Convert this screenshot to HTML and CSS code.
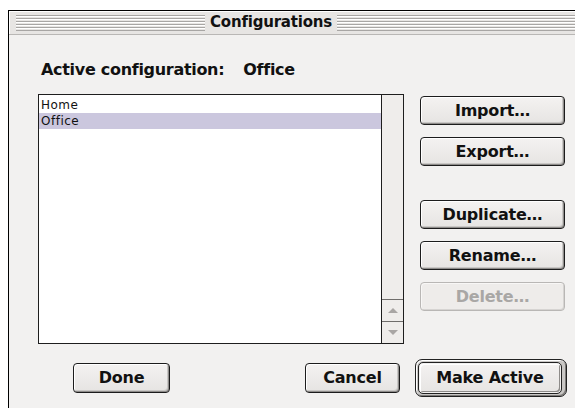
FILE: index.html
```html
<!DOCTYPE html>
<html>
<head>
<meta charset="utf-8">
<title>Configurations</title>
<link rel="stylesheet" href="styles.css">
</head>
<body>
<div class="window">
  <div class="titlebar">
    <div class="stripes stripes-left"></div>
    <div class="title">Configurations</div>
    <div class="stripes stripes-right"></div>
  </div>
  <div class="content">
    <div class="heading"><span>Active configuration:</span><span class="active-name">Office</span></div>
    <div class="main-row">
      <div class="listbox">
        <ul class="list">
          <li class="item">Home</li>
          <li class="item selected">Office</li>
        </ul>
        <div class="scrollbar">
          <div class="track"></div>
          <div class="arrow arrow-up"><span class="tri tri-up"></span></div>
          <div class="arrow arrow-down"><span class="tri tri-down"></span></div>
        </div>
      </div>
      <div class="side-buttons">
        <button class="btn">Import…</button>
        <button class="btn">Export…</button>
        <button class="btn group-start">Duplicate…</button>
        <button class="btn">Rename…</button>
        <button class="btn" disabled>Delete…</button>
      </div>
    </div>
    <div class="bottom-row">
      <button class="btn btn-done">Done</button>
      <button class="btn btn-cancel">Cancel</button>
      <div class="default-ring">
        <button class="btn btn-default">Make Active</button>
      </div>
    </div>
  </div>
</div>
</body>
</html>
```

FILE: styles.css
```css
html, body {
  margin: 0;
  padding: 0;
  background: #ffffff;
  overflow: hidden;
}

body {
  width: 575px;
  height: 408px;
}

.window {
  margin: 10px 0 0 8px;
  width: 567px;
  height: 398px;
  border-top: 1px solid #000;
  border-left: 1px solid #000;
  background: #f2f1f0;
  box-sizing: border-box;
  overflow: hidden;
}

/* title bar with pinstripes */
.titlebar {
  height: 23px;
  display: flex;
  align-items: center;
  padding-left: 7px;
  background: #e7e5e3;
  border-bottom: 1px solid #b9b7b5;
  box-shadow: inset 1px 1px 0 #ffffff;
}

.stripes {
  height: 16px;
  background: repeating-linear-gradient(
    to bottom,
    #a8a6a4 0px, #a8a6a4 1px,
    #ffffff 1px, #ffffff 2px,
    #e7e5e3 2px, #e7e5e3 3px
  );
}

.stripes-left {
  width: 189px;
}

.stripes-right {
  flex: 1;
}

.title {
  padding: 0 5px;
  font-family: "DejaVu Sans", sans-serif;
  font-weight: bold;
  font-size: 15px;
  letter-spacing: -0.2px;
  color: #111;
  line-height: 23px;
}

.content {
  padding: 25px 0 0 29px;
  font-family: "DejaVu Sans", sans-serif;
}

.heading {
  height: 20px;
  line-height: 20px;
  padding-left: 3px;
  font-weight: bold;
  font-size: 16px;
  letter-spacing: -0.3px;
  color: #111;
  display: flex;
  gap: 19px;
}

.main-row {
  display: flex;
  gap: 16px;
  margin-top: 14px;
}

.listbox {
  width: 366px;
  height: 250px;
  box-sizing: border-box;
  border: 1px solid #1e1e1e;
  display: flex;
  background: #ffffff;
}

.list {
  flex: 1;
  margin: 0;
  padding: 2px 0 0 0;
  list-style: none;
  border-right: 1px solid #1e1e1e;
}

.item {
  height: 16px;
  line-height: 16px;
  padding-left: 2px;
  font-size: 12px;
  letter-spacing: 0.5px;
  color: #111;
}

.item.selected {
  background: #cbc7de;
}

.scrollbar {
  width: 21px;
  display: flex;
  flex-direction: column;
  background: #efedeb;
}

.track {
  flex: 1;
}

.arrow {
  height: 21px;
  border-top: 1px solid #6f6d6b;
  display: flex;
  align-items: center;
  justify-content: center;
}

.tri {
  width: 0;
  height: 0;
  border-left: 5px solid transparent;
  border-right: 5px solid transparent;
}

.tri-up {
  border-bottom: 5px solid #a9a6a4;
}

.tri-down {
  border-top: 5px solid #a9a6a4;
}

.side-buttons {
  display: flex;
  flex-direction: column;
  gap: 12px;
  margin-top: 2px;
}

.side-buttons .group-start {
  margin-top: 22px;
}

/* push buttons */
.btn {
  width: 145px;
  height: 29px;
  padding: 0;
  box-sizing: border-box;
  border: 1px solid #1c1c1c;
  border-radius: 4px;
  background: linear-gradient(to bottom, #f4f2f1, #e6e4e2);
  box-shadow: inset 1px 1px 0 #ffffff, inset -1px -1px 0 #8e8c8a, inset -2px -2px 0 #c9c7c5;
  font-family: "DejaVu Sans", sans-serif;
  font-weight: bold;
  font-size: 16px;
  letter-spacing: -0.2px;
  color: #111;
  line-height: 26px;
  text-align: center;
}

.btn:disabled {
  border-color: #b9b7b5;
  color: #a9a7a5;
  background: #eeecea;
  box-shadow: inset 1px 1px 0 #f8f7f6, inset -1px -1px 0 #d6d4d2;
}

.bottom-row {
  display: flex;
  align-items: center;
  height: 38px;
  margin-top: 15px;
}

.btn-done {
  width: 97px;
  height: 30px;
  margin-left: 35px;
}

.btn-cancel {
  width: 95px;
  height: 30px;
  margin-left: 135px;
}

.default-ring {
  margin-left: 15px;
  width: 152px;
  height: 38px;
  box-sizing: border-box;
  border: 1px solid #222;
  border-radius: 7px;
  padding: 2px;
  background: #c9c7c5;
  box-shadow: inset 1px 1px 0 #ffffff, inset -1px -1px 0 #7d7b79;
}

.btn-default {
  display: block;
  width: 144px;
  height: 32px;
  border-radius: 5px;
  border: 1px solid #222;
  padding: 0;
  background: linear-gradient(to bottom, #f4f2f1, #e6e4e2);
  box-shadow: inset 0 0 0 1px #f2f1f0, inset 2px 2px 0 #ffffff, inset -2px -2px 0 #8e8c8a;
  line-height: 28px;
}
```
